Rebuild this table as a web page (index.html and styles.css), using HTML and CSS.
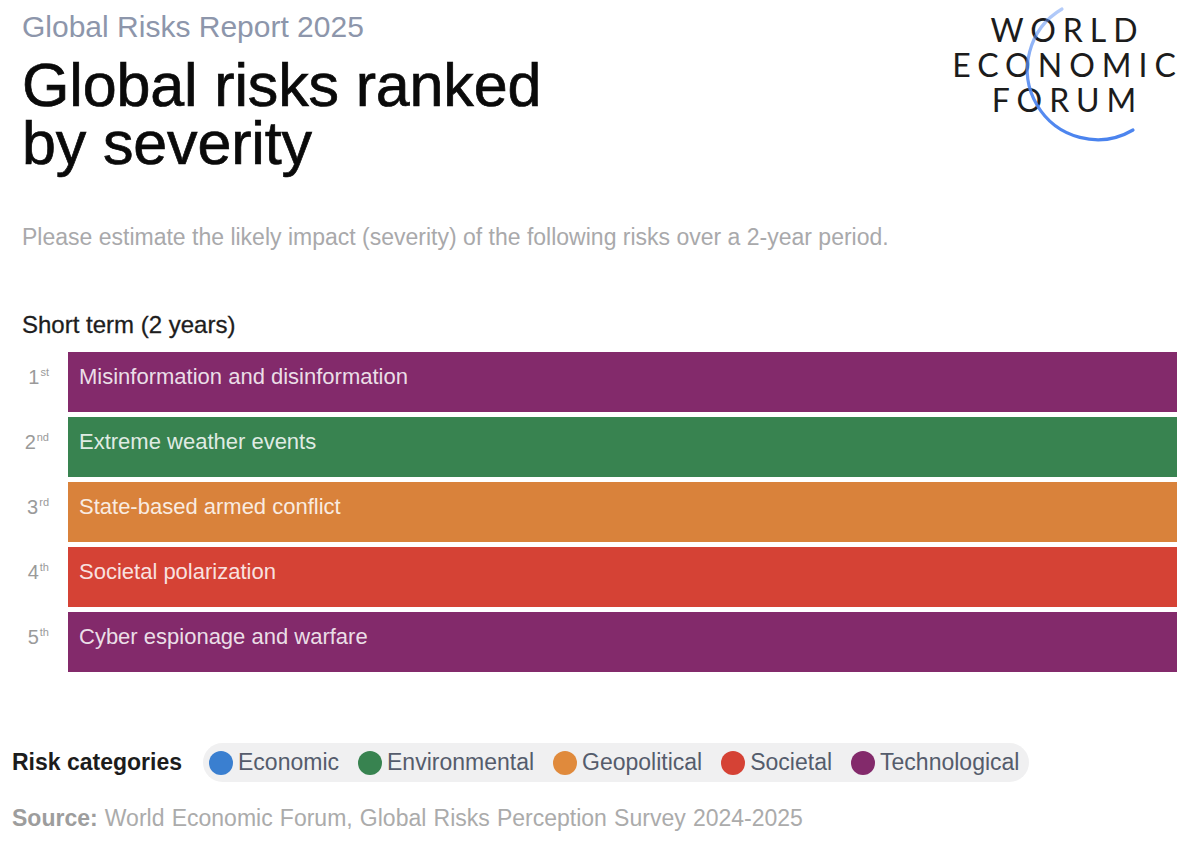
FILE: index.html
```html
<!DOCTYPE html>
<html lang="en">
<head>
<meta charset="utf-8">
<title>Global risks ranked by severity</title>
<link rel="stylesheet" href="styles.css">
</head>
<body>
<div class="page">
  <header class="top">
    <div class="heading">
      <div class="kicker">Global Risks Report 2025</div>
      <h1 class="title">Global risks ranked<br>by severity</h1>
    </div>
    <div class="logo">
      <div class="logo-text">
        <span>WORLD</span>
        <span>ECONOMIC</span>
        <span>FORUM</span>
      </div>
      <svg class="logo-arc" width="240" height="160" viewBox="0 0 240 160">
        <defs>
          <linearGradient id="arcfade" x1="0" y1="0" x2="0" y2="1">
            <stop offset="0" stop-color="#5b8ff2" stop-opacity="0.45"/>
            <stop offset="0.6" stop-color="#4f86ef" stop-opacity="0.9"/>
            <stop offset="1" stop-color="#4a83ee" stop-opacity="1"/>
          </linearGradient>
        </defs>
        <path d="M117 9 A70 70 0 1 0 188 130" fill="none" stroke="url(#arcfade)" stroke-width="3.2" stroke-linecap="round"/>
      </svg>
    </div>
  </header>

  <p class="question">Please estimate the likely impact (severity) of the following risks over a 2-year period.</p>

  <h2 class="term">Short term (2 years)</h2>

  <div class="ranking">
    <div class="row">
      <div class="rank">1<sup>st</sup></div>
      <div class="bar tech">Misinformation and disinformation</div>
    </div>
    <div class="row">
      <div class="rank">2<sup>nd</sup></div>
      <div class="bar env">Extreme weather events</div>
    </div>
    <div class="row">
      <div class="rank">3<sup>rd</sup></div>
      <div class="bar geo">State-based armed conflict</div>
    </div>
    <div class="row">
      <div class="rank">4<sup>th</sup></div>
      <div class="bar soc">Societal polarization</div>
    </div>
    <div class="row">
      <div class="rank">5<sup>th</sup></div>
      <div class="bar tech">Cyber espionage and warfare</div>
    </div>
  </div>

  <div class="legend">
    <span class="legend-label">Risk categories</span>
    <div class="pill">
      <span class="item"><span class="dot eco-dot"></span>Economic</span>
      <span class="item"><span class="dot env-dot"></span>Environmental</span>
      <span class="item"><span class="dot geo-dot"></span>Geopolitical</span>
      <span class="item"><span class="dot soc-dot"></span>Societal</span>
      <span class="item"><span class="dot tech-dot"></span>Technological</span>
    </div>
  </div>

  <p class="source"><b>Source:</b> World Economic Forum, Global Risks Perception Survey 2024-2025</p>
</div>
</body>
</html>
```

FILE: styles.css
```css
html, body {
  margin: 0;
  padding: 0;
  background: #ffffff;
}

body {
  font-family: "Liberation Sans", Arial, Helvetica, sans-serif;
  color: #111;
}

.page {
  width: 1200px;
  height: 842px;
  overflow: hidden;
}

.top {
  display: flex;
  justify-content: space-between;
  align-items: flex-start;
  padding: 10px 15px 0 22px;
}

.kicker {
  font-size: 30px;
  line-height: 34px;
  color: #8d96ab;
}

.title {
  margin: 12px 0 0 0;
  font-size: 61px;
  line-height: 58px;
  font-weight: 400;
  color: #0a0a0a;
  letter-spacing: -0.15px;
  -webkit-text-stroke: 0.7px #0a0a0a;
}

.logo {
  position: relative;
  width: 240px;
  height: 160px;
  margin-top: -10px;
}

.logo-text {
  display: flex;
  flex-direction: column;
  align-items: center;
  padding-top: 12px;
  padding-left: 5px;
  font-family: "Lato", "Open Sans", sans-serif;
  font-size: 32px;
  line-height: 35px;
  letter-spacing: 7px;
  color: #1c1c1c;
}

.logo-arc {
  position: absolute;
  left: 0;
  top: 0;
}

.question {
  margin: 51px 0 0 22px;
  font-size: 23px;
  line-height: 28px;
  color: #a9a9ab;
}

.term {
  margin: 60px 0 0 22px;
  font-size: 24px;
  line-height: 28px;
  font-weight: 400;
  color: #1d1d1d;
  -webkit-text-stroke: 0.3px #1d1d1d;
}

.ranking {
  display: flex;
  flex-direction: column;
  gap: 5px;
  margin-top: 13px;
  padding-right: 23px;
}

.row {
  display: flex;
  height: 60px;
}

.rank {
  width: 49px;
  padding-right: 19px;
  padding-top: 14px;
  text-align: right;
  font-size: 20px;
  line-height: 23px;
  color: #9a9a9a;
}

.rank sup {
  font-size: 11px;
  vertical-align: top;
  line-height: 12px;
  margin-left: 1px;
}

.bar {
  flex: 1;
  padding: 12px 0 0 11px;
  font-size: 22px;
  line-height: 26px;
  color: rgba(255, 255, 255, 0.86);
}

.tech { background: #832a6b; }
.env  { background: #388350; }
.geo  { background: #d9823b; }
.soc  { background: #d54235; }

.legend {
  display: flex;
  align-items: center;
  gap: 21px;
  margin-top: 71px;
  padding-left: 12px;
}

.legend-label {
  font-size: 23px;
  font-weight: 700;
  color: #1c1c1c;
}

.pill {
  display: flex;
  align-items: center;
  gap: 19px;
  height: 39px;
  padding: 0 10px 0 6px;
  border-radius: 20px;
  background: #f0f0f1;
}

.item {
  display: flex;
  align-items: center;
  gap: 5px;
  font-size: 23px;
  color: #555c6c;
}

.dot {
  width: 24px;
  height: 24px;
  border-radius: 50%;
}

.eco-dot { background: #3a7fd0; }
.env-dot { background: #388350; }
.geo-dot { background: #e08a3c; }
.soc-dot { background: #d54235; }
.tech-dot { background: #832a6b; }

.source {
  margin: 23px 0 0 12px;
  font-size: 23px;
  line-height: 26px;
  word-spacing: 0.8px;
  color: #ababab;
}

.source b {
  color: #9d9d9d;
}
```
